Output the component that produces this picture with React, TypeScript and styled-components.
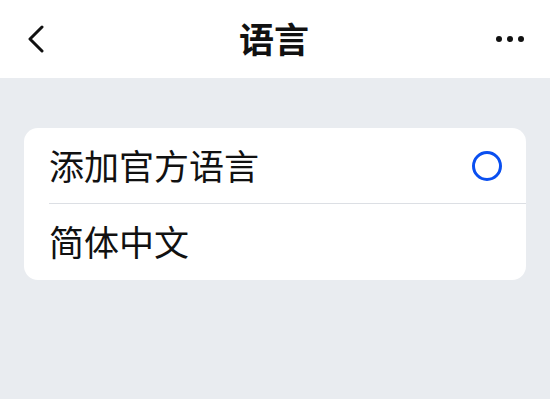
import React from "react";
import styled, { createGlobalStyle } from "styled-components";

const GlobalStyle = createGlobalStyle`
  html, body {
    margin: 0;
    padding: 0;
    background: #e9ecf0;
  }
  body {
    font-family: "Noto Sans CJK SC", "Noto Sans", sans-serif;
    color: #111;
  }
`;

const App = () => {
  const rows: { label: string; radio?: boolean }[] = [
    { label: "添加官方语言", radio: true },
    { label: "简体中文" },
  ];

  return (
    <Page>
      <GlobalStyle />
      <NavBar>
        <IconButton aria-label="back">
          <svg width="20" height="28" viewBox="0 0 20 28">
            <path
              d="M15 2 L3 14 L15 26"
              fill="none"
              stroke="#111"
              strokeWidth="3"
              strokeLinecap="round"
              strokeLinejoin="round"
            />
          </svg>
        </IconButton>
        <Title>语言</Title>
        <IconButton aria-label="more">
          <svg width="30" height="8" viewBox="0 0 30 8">
            <circle cx="3" cy="4" r="3" fill="#111" />
            <circle cx="14" cy="4" r="3" fill="#111" />
            <circle cx="25" cy="4" r="3" fill="#111" />
          </svg>
        </IconButton>
      </NavBar>
      <Content>
        <Card>
          {rows.map((row, index) => (
            <Row key={row.label} $divider={index < rows.length - 1}>
              <Label>{row.label}</Label>
              {row.radio && <Radio />}
            </Row>
          ))}
        </Card>
      </Content>
    </Page>
  );
};

export default App;

const Page = styled.div`
  display: flex;
  flex-direction: column;
  width: 550px;
  height: 399px;
  overflow: hidden;
  background: #e9ecf0;
`;

const NavBar = styled.div`
  display: flex;
  align-items: center;
  justify-content: space-between;

  height: 78px;
  padding: 0 24px 0 22px;
  box-sizing: border-box;

  background: #fff;
`;

const IconButton = styled.div`
  display: flex;
  align-items: center;
  justify-content: center;
  width: 30px;
  height: 40px;
`;

const Title = styled.div`
  font-size: 35px;
  font-weight: 700;
  line-height: 1;
  padding-bottom: 4px;
`;

const Content = styled.div`
  padding: 50px 24px 0;
`;

const Card = styled.div`
  display: flex;
  flex-direction: column;
  background: #fff;
  border-radius: 14px;
  overflow: hidden;
`;

const Row = styled.div<{ $divider?: boolean }>`
  position: relative;
  display: flex;
  align-items: center;
  justify-content: space-between;

  height: 76px;
  padding: 0 24px 4px 25px;
  box-sizing: border-box;

  &::after {
    content: "";
    display: ${(p) => (p.$divider ? "block" : "none")};
    position: absolute;
    left: 25px;
    right: 0;
    bottom: 0;
    height: 1px;
    background: #dcdfe4;
  }
`;

const Label = styled.span`
  font-size: 35px;
  line-height: 1;
  color: #111;
`;

const Radio = styled.span`
  width: 24px;
  height: 24px;
  margin-top: 4px;
  border: 3px solid #0a4ff0;
  border-radius: 50%;
`;
